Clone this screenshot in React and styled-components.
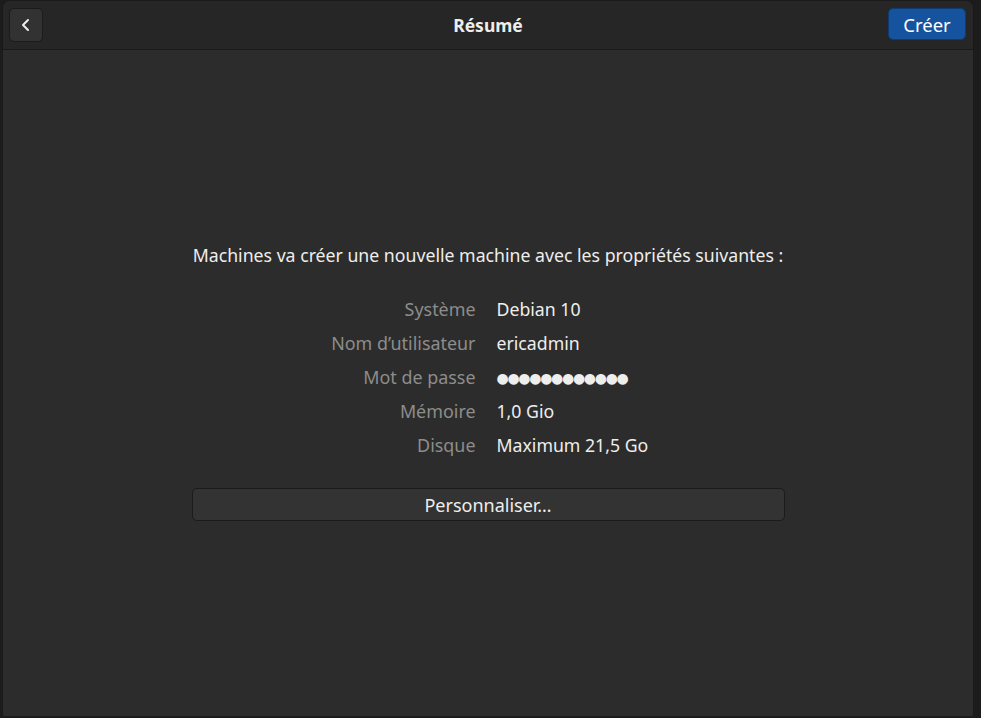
import styled, { createGlobalStyle } from "styled-components";

const Global = createGlobalStyle`
  html, body {
    margin: 0;
    padding: 0;
    background: #1c1c1c;
    font-family: "Noto Sans", "DejaVu Sans", sans-serif;
    -webkit-font-smoothing: antialiased;
  }
`;

const details = [
  { label: "Système", value: "Debian 10" },
  { label: "Nom d’utilisateur", value: "ericadmin" },
  { label: "Mot de passe", value: "●●●●●●●●●●●●", secret: true },
  { label: "Mémoire", value: "1,0 Gio" },
  { label: "Disque", value: "Maximum 21,5 Go" },
];

export default function App() {
  return (
    <>
      <Global />
      <Window>
        <HeaderBar>
          <BackButton aria-label="Retour">
            <svg width="16" height="16" viewBox="0 0 16 16">
              <path d="M10 3 L5 8 L10 13" fill="none" stroke="#eeeeec" strokeWidth="2" strokeLinecap="round" strokeLinejoin="round" />
            </svg>
          </BackButton>
          <Title>Résumé</Title>
          <CreateButton>Créer</CreateButton>
        </HeaderBar>
        <Content>
          <Summary>
            <Intro>Machines va créer une nouvelle machine avec les propriétés suivantes :</Intro>
            <Grid>
              {details.map((d) => (
                <Row key={d.label}>
                  <Label>{d.label}</Label>
                  <Value secret={d.secret ? true : undefined}>{d.value}</Value>
                </Row>
              ))}
            </Grid>
            <CustomizeButton>Personnaliser…</CustomizeButton>
          </Summary>
        </Content>
      </Window>
    </>
  );
}

const Window = styled.div`
  margin-left: 2px;
  width: 972px;
  height: 716px;
  background: #2c2c2c;
  border: 1px solid #1a1a1a;
  border-bottom: none;
  border-radius: 8px 8px 0 0;
  box-sizing: border-box;
  display: flex;
  flex-direction: column;
  overflow: hidden;
`;

const HeaderBar = styled.div`
  height: 48px;
  flex-shrink: 0;
  display: grid;
  grid-template-columns: 1fr auto 1fr;
  align-items: center;
  padding: 0 6px;
  background: #262626;
  border-bottom: 1px solid #1a1a1a;
`;

const BackButton = styled.button`
  justify-self: start;
  width: 34px;
  height: 34px;
  display: flex;
  align-items: center;
  justify-content: center;
  background: #323232;
  border: 1px solid #1b1b1b;
  border-radius: 5px;
  padding: 0;
  margin-top: -1px;
`;

const Title = styled.div`
  color: #eeeeec;
  font-weight: 700;
  font-size: 17.5px;
  margin-top: -1px;
`;

const CreateButton = styled.button`
  justify-self: end;
  width: 78px;
  height: 32px;
  background: #15539e;
  border: 1px solid #0f3b71;
  border-radius: 5px;
  color: #ffffff;
  font-family: inherit;
  font-size: 18.5px;
  padding: 0;
  margin-right: 1px;
  margin-top: -2px;
`;

const Content = styled.div`
  flex: 1;
  display: flex;
  align-items: center;
  justify-content: center;
  padding-bottom: 2px;
`;

const Summary = styled.div`
  width: 593px;
  display: flex;
  flex-direction: column;
  align-items: stretch;
`;

const Intro = styled.div`
  color: #eeeeec;
  font-size: 17.7px;
  text-align: center;
  white-space: nowrap;
  margin-bottom: 25px;
`;

const Grid = styled.div`
  display: flex;
  flex-direction: column;
  margin-bottom: 26px;
`;

const Row = styled.div`
  display: grid;
  grid-template-columns: 284px 1fr;
  column-gap: 21px;
  height: 34px;
  align-items: center;
`;

const Label = styled.div`
  color: #8d8d8b;
  font-size: 17.9px;
  text-align: right;
  white-space: nowrap;
`;

const Value = styled.div`
  color: #eeeeec;
  font-size: ${(p) => (p.secret ? "14px" : "17.7px")};
  letter-spacing: ${(p) => (p.secret ? "-1.3px" : "normal")};
  white-space: nowrap;
`;

const CustomizeButton = styled.button`
  height: 33px;
  background: #333333;
  border: 1px solid #1b1b1b;
  border-radius: 5px;
  color: #eeeeec;
  font-family: inherit;
  font-size: 18px;
  padding: 0;
`;
